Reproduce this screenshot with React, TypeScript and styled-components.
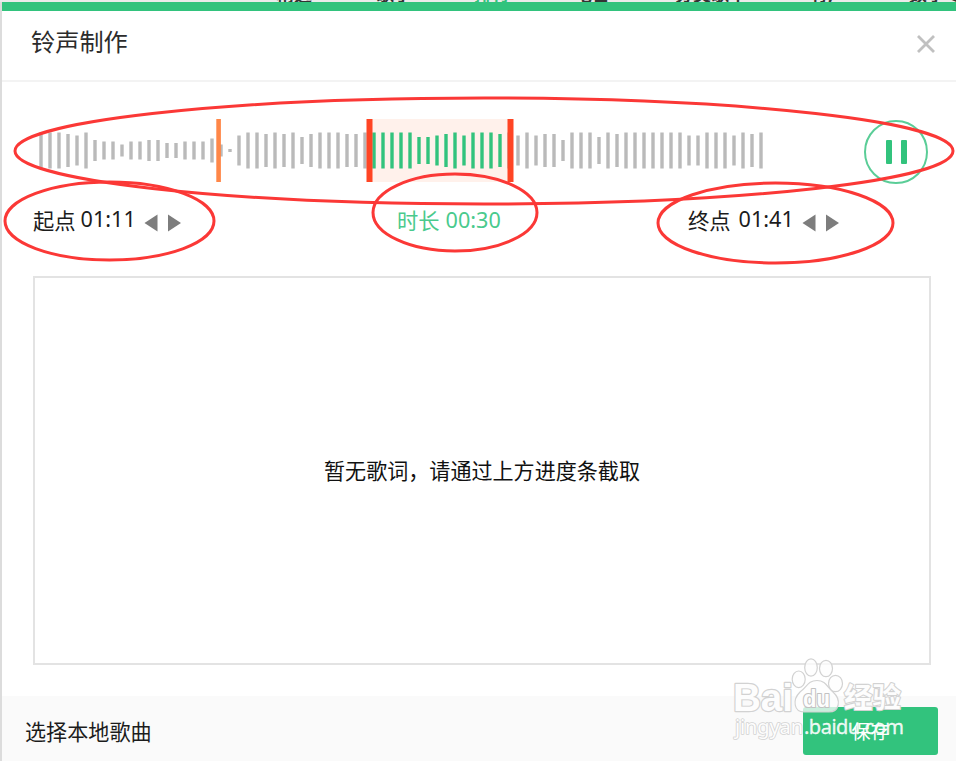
import React from "react";
import styled, { createGlobalStyle } from "styled-components";

const GREEN = "#32c37d";
const MARK = "#fb3836";

const GlobalStyle = createGlobalStyle`
  * { box-sizing: border-box; }
  body { margin: 0; background: #fff; overflow: hidden; }
`;

const Page = styled.div`
  position: relative;
  display: flex;
  flex-direction: column;
  width: 956px;
  height: 761px;
  overflow: hidden;
  background: #dcdcdc;
  color: #1c1c1c;
  font-family: "Noto Sans CJK SC", "Noto Sans", sans-serif;
  font-size: 21px;
  line-height: 30px;
`;

const TabStrip = styled.nav`
  display: flex;
  align-items: flex-end;
  height: 2px;
  padding-left: 276px;
  overflow: hidden;
  background: #ebebeb;
`;

const Tab = styled.span<{ $width: number; $active?: boolean }>`
  flex: none;
  width: ${(p) => p.$width}px;
  margin-bottom: -3px;
  font-size: 18px;
  line-height: 24px;
  font-weight: 700;
  white-space: nowrap;
  color: ${(p) => (p.$active ? GREEN : "#333")};
`;

const Dialog = styled.section`
  display: flex;
  flex-direction: column;
  flex: 1;
  margin-left: 2px;
  background: #fff;
  border-top: 9px solid ${GREEN};
`;

const Header = styled.header`
  display: flex;
  align-items: center;
  justify-content: space-between;
  height: 71px;
  padding: 0 21px 7px 29px;
  border-bottom: 2px solid #f3f3f3;
`;

const Title = styled.h1`
  margin: -2px 0 0;
  font-size: 24.2px;
  line-height: 32px;
  font-weight: 400;
  color: #2c2c2c;
`;

const CloseButton = styled.button`
  display: flex;
  margin: 4px 0 0;
  padding: 0;
  border: 0;
  background: none;
`;

const Player = styled.div`
  display: flex;
  justify-content: space-between;
  height: 63px;
  margin-top: 37px;
  padding: 0 28px 0 34px;
`;

const Wave = styled.svg`
  display: block;
  flex: none;
`;

const PauseButton = styled.button`
  display: flex;
  align-items: center;
  justify-content: center;
  gap: 9px;
  width: 64px;
  height: 64px;
  margin-top: 1px;
  padding: 0 0 1px;
  border: 2px solid #5acd97;
  border-radius: 50%;
  background: transparent;
`;

const PauseBar = styled.span`
  width: 6px;
  height: 24px;
  border-radius: 1px;
  background: ${GREEN};
`;

const Times = styled.div`
  display: grid;
  grid-template-columns: 364px 291px 1fr;
  height: 36px;
  margin: 20px 0 0 31px;
`;

const TimeField = styled.div<{ $accent?: boolean; $gap?: number }>`
  display: flex;
  align-items: center;
  gap: ${(p) => p.$gap ?? 6}px;
  color: ${(p) => (p.$accent ? "#4aca8d" : "#1c1c1c")};
`;

const TimeLabel = styled.span`
  font-size: 21.3px;
  line-height: 30px;
`;

const TimeValue = styled.span<{ $lift: number }>`
  margin-top: -${(p) => p.$lift}px;
  font-family: "Noto Sans", sans-serif;
  font-size: 21.6px;
`;

const Steps = styled.svg<{ $gap: number }>`
  display: block;
  margin: 5px 0 0 ${(p) => p.$gap}px;
`;

const Lyrics = styled.main`
  display: flex;
  align-items: center;
  justify-content: center;
  width: 898px;
  height: 389px;
  margin: 38px 0 0 31px;
  padding-bottom: 2px;
  border: 2px solid #e3e3e3;
  color: #111;
  font-size: 21.07px;
`;

const Footer = styled.footer`
  display: flex;
  justify-content: space-between;
  height: 65px;
  margin-top: auto;
  padding: 11px 18px 0 23px;
  background: #fafafa;
`;

const LocalSong = styled.span`
  margin-top: 9px;
  font-size: 21.1px;
`;

const SaveButton = styled.button`
  width: 135px;
  height: 48px;
  padding: 0;
  border: 0;
  border-radius: 3px;
  background: ${GREEN};
  color: #fff;
  font: 19px/48px "Noto Sans CJK SC", sans-serif;
`;

const Overlay = styled.svg`
  position: absolute;
  inset: 0;
  pointer-events: none;
`;

const TABS = [
  { label: "精选", width: 100 },
  { label: "歌手", width: 98 },
  { label: "排行", width: 100, active: true },
  { label: "电台", width: 101 },
  { label: "分类歌单", width: 135 },
  { label: "有声", width: 99 },
  { label: "数字专辑", width: 80 },
];

const BARS = [
  36, 36, 36, 33, 30, 36, 21, 18, 18, 12, 18, 18, 21, 21, 15, 15, 18, 18, 18, 24,
  12, 3, 30, 36, 36, 33, 36, 33, 36, 27, 33, 36, 36, 36, 33, 33, 36, 36, 36, 36,
  36, 36, 27, 27, 30, 33, 36, 30, 36, 36, 36, 33, 36, 30, 36, 30, 33, 33, 21, 36,
  36, 36, 27, 36, 33, 36, 36, 36, 36, 36, 36, 36, 30, 30, 36, 36, 36, 30, 36, 33, 36,
];

function Waveform() {
  return (
    <Wave width="730" height="63" viewBox="0 0 730 63">
      <rect x="333" y="0" width="142" height="63" fill="#fff1eb" />
      {BARS.map((h, i) => (
        <rect
          key={i}
          x={3.3 + i * 9}
          y={31.5 - h / 2}
          width="3.4"
          height={h}
          fill={i > 36 && i < 52 ? GREEN : "#bababa"}
        />
      ))}
      <rect x="180.3" y="0" width="4.6" height="63" fill="#ff8748" />
      <rect x="330.5" y="0" width="6" height="63" fill="#ff4524" />
      <rect x="471.5" y="0" width="6" height="63" fill="#ff4524" />
    </Wave>
  );
}

function StepArrows({ gap = 3 }: { gap?: number }) {
  return (
    <Steps $gap={gap} width="38" height="18" viewBox="0 0 38 18" fill="#7d7d7d">
      <path d="M0.5 9 13.5 0.5V17.5Z" />
      <path d="M24 0.5 37 9 24 17.5Z" />
    </Steps>
  );
}

function Watermark() {
  return (
    <g fill="#fdfdfd" stroke="#d2d2d2" strokeWidth="1.2" strokeLinejoin="round">
      <g fillOpacity="0.75">
        <ellipse cx="798.7" cy="679.3" rx="6.5" ry="8.3" />
        <ellipse cx="811" cy="667.5" rx="6.3" ry="8.7" />
        <ellipse cx="826" cy="668.5" rx="6.5" ry="8.2" />
        <ellipse cx="835.5" cy="683.5" rx="7" ry="8.2" />
        <path d="M817 680.5C826 680.5 827 687 833 692C842 700 839 712 829 712H804C794 712 792 700 800 692C807 687 808 680.5 817 680.5Z" />
      </g>
      <g fontFamily="Liberation Sans, sans-serif" fontWeight="700">
        <text x="733" y="710.5" fontSize="38" strokeWidth="2.4" paintOrder="stroke" textLength="60" lengthAdjust="spacingAndGlyphs">Bai</text>
        <text x="803" y="707" fontSize="23" stroke="#c2c2c2" strokeWidth="2.2" paintOrder="stroke" textLength="27" lengthAdjust="spacingAndGlyphs">du</text>
      </g>
      <text x="844" y="708" fontFamily="Noto Sans CJK SC, sans-serif" fontSize="28.5" fontWeight="700" strokeWidth="2.2" paintOrder="stroke">经验</text>
      <g fontFamily="Noto Sans, sans-serif" fontSize="20">
        <text x="735" y="733.5" strokeWidth="1.6" paintOrder="stroke" textLength="68" lengthAdjust="spacing">jingyan</text>
        <text x="804" y="733.5" stroke="#fff" strokeWidth="0.3" fillOpacity="0.92" textLength="100" lengthAdjust="spacing">.baidu.com</text>
      </g>
    </g>
  );
}

export default function App() {
  return (
    <Page>
      <GlobalStyle />
      <TabStrip>
        {TABS.map((t) => (
          <Tab key={t.label} $width={t.width} $active={t.active}>{t.label}</Tab>
        ))}
      </TabStrip>
      <Dialog>
        <Header>
          <Title>铃声制作</Title>
          <CloseButton aria-label="关闭">
            <svg width="18" height="18" viewBox="0 0 18 18" stroke="#c0c0c0" strokeWidth="2.8">
              <path d="M1 1 17 17M17 1 1 17" />
            </svg>
          </CloseButton>
        </Header>
        <Player>
          <Waveform />
          <PauseButton aria-label="暂停">
            <PauseBar />
            <PauseBar />
          </PauseButton>
        </Player>
        <Times>
          <TimeField $gap={5}>
            <TimeLabel>起点</TimeLabel>
            <TimeValue $lift={2}>01:11</TimeValue>
            <StepArrows />
          </TimeField>
          <TimeField $accent>
            <TimeLabel>时长</TimeLabel>
            <TimeValue $lift={0}>00:30</TimeValue>
          </TimeField>
          <TimeField $gap={8}>
            <TimeLabel>终点</TimeLabel>
            <TimeValue $lift={2}>01:41</TimeValue>
            <StepArrows gap={0} />
          </TimeField>
        </Times>
        <Lyrics>暂无歌词，请通过上方进度条截取</Lyrics>
        <Footer>
          <LocalSong>选择本地歌曲</LocalSong>
          <SaveButton>保存</SaveButton>
        </Footer>
      </Dialog>
      <Overlay width="956" height="761" viewBox="0 0 956 761">
        <g fill="none" stroke={MARK} strokeWidth="3">
          <ellipse cx="484" cy="151" rx="469" ry="53" />
          <ellipse cx="109.5" cy="221" rx="104.5" ry="39" />
          <ellipse cx="455" cy="212.5" rx="82" ry="38.5" />
          <ellipse cx="775.5" cy="223" rx="117.5" ry="40" />
        </g>
        <Watermark />
      </Overlay>
    </Page>
  );
}
